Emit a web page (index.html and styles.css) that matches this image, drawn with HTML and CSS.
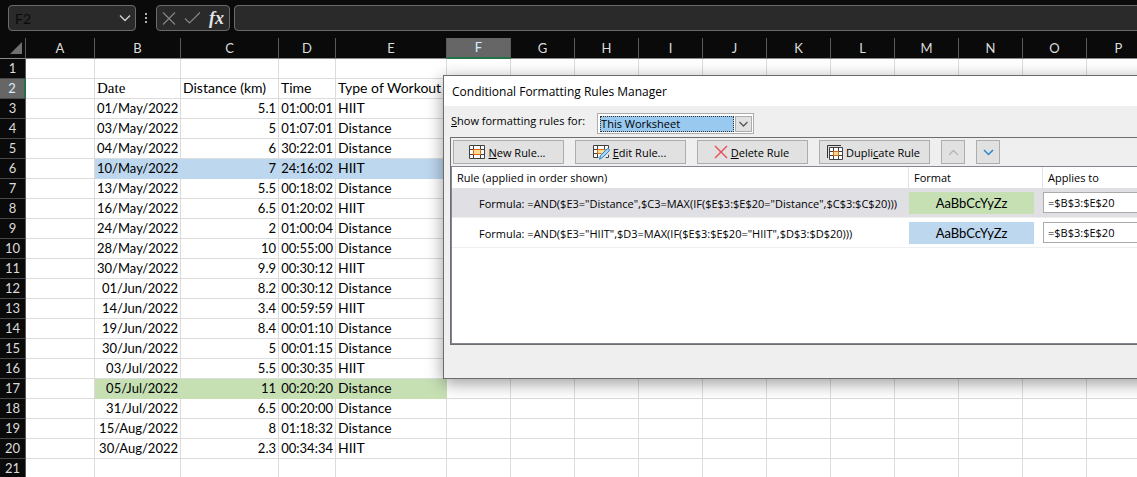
FILE: index.html
```html
<!DOCTYPE html>
<html lang="en">
<head>
<meta charset="utf-8">
<title>Workout log</title>
<link rel="stylesheet" href="styles.css">
</head>
<body>
<header class="formula-bar">
  <div class="name-box">
    <input class="name-input" aria-label="Name box" value="F2">
    <svg width="12" height="8" viewBox="0 0 12 8" fill="none" stroke="#d0d0d0" stroke-width="1.4"><path d="M1 1.5l5 5 5-5"/></svg>
  </div>
  <svg class="grip" width="4" height="12" viewBox="0 0 4 12" fill="#b0b0b0"><path d="M1 1h2v2H1zM1 5h2v2H1zM1 9h2v2H1z"/></svg>
  <div class="formula-actions">
    <button class="bare" aria-label="Cancel"><svg width="14" height="14" viewBox="0 0 14 14" fill="none" stroke="#858585" stroke-width="1.2"><path d="M1 1.500l12 12M13 1.500l-12 12"/></svg></button>
    <button class="bare" aria-label="Enter"><svg width="17" height="14" viewBox="0 0 17 14" fill="none" stroke="#858585" stroke-width="1.2"><path d="M1 7.500l4.500 4.500L16 1.500"/></svg></button>
    <button class="bare fx" aria-label="Insert function">fx</button>
  </div>
  <input class="formula-input" aria-label="Formula">
</header>

<main class="sheet-area">
  <table class="sheet" id="sheet"></table>
</main>

<section class="dialog" role="dialog" aria-labelledby="dialog-title">
  <h1 class="dialog-title" id="dialog-title">Conditional Formatting Rules Manager</h1>
  <div class="scope">
    <label for="scope"><u>S</u>how formatting rules for:</label>
    <div class="combo">
      <select id="scope" class="combo-select"><option>This Worksheet</option></select>
      <span class="combo-arrow"><svg width="9" height="6" viewBox="0 0 9 6" fill="none" stroke="#555" stroke-width="1.3"><path d="M.5 1l4 4 4-4"/></svg></span>
    </div>
  </div>
  <div class="rules-panel">
    <div class="rules-toolbar">
      <button class="btn"><svg width="16" height="14" viewBox="0 0 16 14" fill="none"><path fill="#fff" stroke="#404040" d="M.5.5h15v13H.5zM4.500.5v13M11.500.5v13M.5 4.500h15M.5 9.500h15"/><path fill="#fbdc90" stroke="#dd6b10" d="M4.500 4.500h7v5h-7z"/></svg><span><u>N</u>ew Rule...</span></button>
      <button class="btn"><svg width="17" height="16" viewBox="0 0 17 16" fill="none"><path fill="#fff" stroke="#404040" d="M.5 1.500h15v12H.5zM4.500 1.500v12M11.500 1.500v12M.5 5.500h15M.5 9.500h15"/><path fill="#fbdc90" stroke="#dd6b10" d="M4.500 5.500h7v4h-7z"/><path stroke="#e1e1e1" stroke-width="6" d="M7 15l9-9"/><path fill="#a9d5f5" stroke="#2b88ca" d="M6.500 15.300l1.200-4 6.300-6.300q1.200-.8 2 0t0 2L9.700 13.300z"/></svg><span><u>E</u>dit Rule...</span></button>
      <button class="btn"><svg width="14" height="14" viewBox="0 0 14 14" fill="none" stroke="#e64c55" stroke-width="1.4"><path d="M1 1l12 12M13 1L1 13"/></svg><span><u>D</u>elete Rule</span></button>
      <button class="btn"><svg width="16" height="15" viewBox="0 0 16 15" fill="none"><path stroke="#333" d="M.5 13V.5H14"/><path fill="#fff" stroke="#404040" d="M2.500 2.500h13v12h-13zM6.500 2.500v12M11.500 2.500v12M2.500 6.500h13M2.500 10.500h13"/><path fill="#fbdc90" stroke="#dd6b10" d="M6.500 6.500h5v4h-5z"/></svg><span>Dupli<u>c</u>ate Rule</span></button>
      <button class="btn btn-icon" aria-label="Move up" disabled><svg width="11" height="7" viewBox="0 0 11 7" fill="none" stroke="#b4b4b4" stroke-width="1.3"><path d="M1 6l4.500-4.500L10 6"/></svg></button>
      <button class="btn btn-icon" aria-label="Move down"><svg width="11" height="7" viewBox="0 0 11 7" fill="none" stroke="#2b88ca" stroke-width="1.5"><path d="M1 1l4.500 4.500L10 1"/></svg></button>
    </div>
    <div class="rules-list">
      <table class="rules">
        <colgroup><col class="col-rule"><col class="col-format"><col></colgroup>
        <thead>
          <tr><th>Rule (applied in order shown)</th><th>Format</th><th>Applies to</th></tr>
        </thead>
        <tbody>
          <tr class="selected">
            <td class="rule">Formula: =AND($E3="Distance",$C3=MAX(IF($E$3:$E$20="Distance",$C$3:$C$20)))</td>
            <td class="format"><div class="swatch green">AaBbCcYyZz</div></td>
            <td class="range"><input class="range-input" aria-label="Applies to, rule 1" value="=$B$3:$E$20"></td>
          </tr>
          <tr>
            <td class="rule">Formula: =AND($E3="HIIT",$D3=MAX(IF($E$3:$E$20="HIIT",$D$3:$D$20)))</td>
            <td class="format"><div class="swatch blue">AaBbCcYyZz</div></td>
            <td class="range"><input class="range-input" aria-label="Applies to, rule 2" value="=$B$3:$E$20"></td>
          </tr>
        </tbody>
      </table>
    </div>
  </div>
</section>
<script src="sheet.js"></script>
</body>
</html>
```
FILE: styles.css
```css
* { box-sizing: border-box; }
body {
  margin: 0;
  height: 100vh;
  position: relative;
  overflow: hidden;
  background: #fff;
  color: #000;
  font-family: "Open Sans", sans-serif;
  font-size: 12px;
}
svg { flex: none; display: block; }
button, input, select { font: inherit; color: inherit; margin: 0; }

/* Formula bar */
.formula-bar {
  display: flex;
  align-items: center;
  height: 38px;
  padding: 5px 0 7px 8px;
  background: #0a0a0a;
}
.name-box, .formula-actions, .formula-input {
  height: 26px;
  border: 1px solid #6a6a6a;
  border-radius: 4px;
  background: #2a2a2a;
}
.name-box { display: flex; align-items: center; width: 128px; padding: 0 4px 0 6px; }
.name-input {
  flex: 1;
  min-width: 0;
  padding: 0;
  border: 0;
  background: none;
  color: #0a0a0a;
  font-family: Lato, sans-serif;
  font-size: 14px;
}
.grip { margin: 0 8px; }
.formula-actions { display: flex; align-items: center; gap: 8px; width: 74px; padding: 0 4px 0 5px; }
.bare { padding: 0; border: 0; background: none; }
.fx {
  color: #e4e4e4;
  font-family: "Liberation Serif", serif;
  font-size: 18px;
  font-style: italic;
  font-weight: 700;
  line-height: 20px;
}
.formula-input { flex: 1; margin: 0 -8px 0 4px; }

/* Worksheet */
.sheet-area { overflow: hidden; font-family: Lato, sans-serif; }
.sheet {
  width: 1151px;
  table-layout: fixed;
  border-collapse: separate;
  border-spacing: 0;
  font-size: 13px;
  line-height: 19px;
}
.sheet th, .sheet td { height: 20px; padding: 0; white-space: nowrap; }
.sheet th {
  background: #0a0a0a;
  color: #dcdcdc;
  font-weight: 400;
  border-right: 1px solid #5a5a5a;
  border-bottom: 1px solid #8a8a8a;
}
.sheet tbody th { border-color: #8a8a8a #5a5a5a #484848 #5a5a5a; }
.sheet td {
  padding: 0 2px;
  border-right: 1px solid #dcdcdc;
  border-bottom: 1px solid #dcdcdc;
  font-size: 14px;
  line-height: 17px;
  vertical-align: top;
}
.sheet .num { text-align: right; font-size: 13px; line-height: 19px; }
.sheet .serif { font-family: "Liberation Serif", serif; font-size: 15px; line-height: 19px; }
.sheet .active { background: #666; color: #d8ecff; }
.sheet thead .active { border-bottom: 2px solid #217346; }
.sheet tbody .active { border-right: 2px solid #217346; }
.sheet .hit-blue td.filled { background: #bdd7ee; border-color: #bdd7ee; }
.sheet .hit-green td.filled { background: #c6e0b4; border-color: #c6e0b4; }
.corner svg { margin: 0 3px 0 auto; }

/* Rules manager dialog */
.dialog {
  position: absolute;
  top: 75px;
  left: 443px;
  right: -24px;
  padding-bottom: 33px;
  border: 1px solid #6c6c6c;
  background: #efefef;
  box-shadow: 0 4px 16px rgba(0, 0, 0, .4);
}
.dialog-title {
  margin: 0;
  padding: 2px 8px 0;
  background: #fff;
  font-size: 12px;
  font-weight: 400;
  line-height: 28px;
}
.scope { display: flex; align-items: flex-start; gap: 12px; padding: 7px 7px 3px; font-size: 11px; line-height: 15px; }
.combo { display: flex; width: 157px; height: 21px; padding: 2px 1px 1px 2px; border: 1px solid #adadad; background: #fff; }
.combo-select {
  appearance: none;
  flex: 1;
  min-width: 0;
  padding: 0;
  border: 1px dotted #333;
  border-radius: 0;
  background: #99c9ef;
  line-height: 14px;
}
.combo-arrow { display: grid; place-items: center; width: 17px; margin-left: 1px; border: 1px solid #adadad; background: #e1e1e1; }
.rules-panel { margin-left: 6px; border: 1px solid #6e6e72; }
.rules-toolbar { display: flex; gap: 11px; padding: 2px; }
.btn {
  display: flex;
  align-items: center;
  justify-content: center;
  gap: 3px;
  width: 111px;
  height: 24px;
  padding: 0 2px 0 0;
  border: 1px solid #adadad;
  background: #e1e1e1;
  font-size: 11px;
  white-space: nowrap;
}
.btn-icon { width: 24px; padding: 0; }
.rules-list { height: 178px; border: 1px solid #828790; border-right: 0; background: #fff; }
.rules { width: 100%; table-layout: fixed; border-collapse: separate; border-spacing: 0; font-size: 11px; }
.col-rule { width: 457px; }
.col-format { width: 134px; }
.rules th {
  height: 21px;
  padding: 0 4px 0 5px;
  border-right: 1px solid #e3e3e3;
  font-weight: 400;
  text-align: left;
}
.rules td { height: 30px; padding: 0; border-bottom: 1px solid #efefef; white-space: nowrap; }
.rules .selected td { background: #e0dfe4; }
.rules .rule { padding: 2px 0 0 27px; }
.swatch {
  width: 125px;
  font-family: Lato, sans-serif;
  font-size: 13px;
  line-height: 22px;
  text-align: center;
}
.green { background: #c6e0b4; }
.blue { background: #bdd7ee; }
.range-input { display: block; width: 100%; height: 21px; padding: 0 4px; border: 1px solid #ababab; background: #fff; }
```
FILE: sheet.js
```js
const columns = "ABCDEFGHIJKLMNOP".split("");
const widths = [26, 69, 86, 98, 57, 111];
const log = [
  ["Date", "Distance (km)", "Time", "Type of Workout"],
  ["01/May/2022", "5.1", "01:00:01", "HIIT"],
  ["03/May/2022", "5", "01:07:01", "Distance"],
  ["04/May/2022", "6", "30:22:01", "Distance"],
  ["10/May/2022", "7", "24:16:02", "HIIT"],
  ["13/May/2022", "5.5", "00:18:02", "Distance"],
  ["16/May/2022", "6.5", "01:20:02", "HIIT"],
  ["24/May/2022", "2", "01:00:04", "Distance"],
  ["28/May/2022", "10", "00:55:00", "Distance"],
  ["30/May/2022", "9.9", "00:30:12", "HIIT"],
  ["01/Jun/2022", "8.2", "00:30:12", "Distance"],
  ["14/Jun/2022", "3.4", "00:59:59", "HIIT"],
  ["19/Jun/2022", "8.4", "00:01:10", "Distance"],
  ["30/Jun/2022", "5", "00:01:15", "Distance"],
  ["03/Jul/2022", "5.5", "00:30:35", "HIIT"],
  ["05/Jul/2022", "11", "00:20:20", "Distance"],
  ["31/Jul/2022", "6.5", "00:20:00", "Distance"],
  ["15/Aug/2022", "8", "01:18:32", "Distance"],
  ["30/Aug/2022", "2.3", "00:34:34", "HIIT"]
];
const highlights = { 6: "hit-blue", 17: "hit-green" };

let html = "<colgroup>";
for (let i = 0; i <= columns.length; i++) {
  html += `<col style="width:${widths[i] || 64}px">`;
}
html += '</colgroup><thead><tr><th class="corner"><svg width="12" height="12" viewBox="0 0 12 12" fill="#707070"><path d="M12 0v12H0z"/></svg></th>';
for (const name of columns) {
  html += `<th class="${name === "F" ? "active" : ""}">${name}</th>`;
}
html += "</tr></thead><tbody>";
for (let row = 1; row <= 21; row++) {
  const entry = log[row - 2] || [];
  html += `<tr class="${highlights[row] || ""}"><th class="${row === 2 ? "active" : ""}">${row}</th>`;
  columns.forEach((name, i) => {
    const text = entry[i - 1] || "";
    let kind = text ? "filled" : "";
    if (row > 2 && i >= 1 && i <= 3) kind += " num";
    if (row === 2 && name === "B") kind += " serif";
    html += `<td class="${kind}">${text}</td>`;
  });
  html += "</tr>";
}
document.getElementById("sheet").innerHTML = html + "</tbody>";
```
